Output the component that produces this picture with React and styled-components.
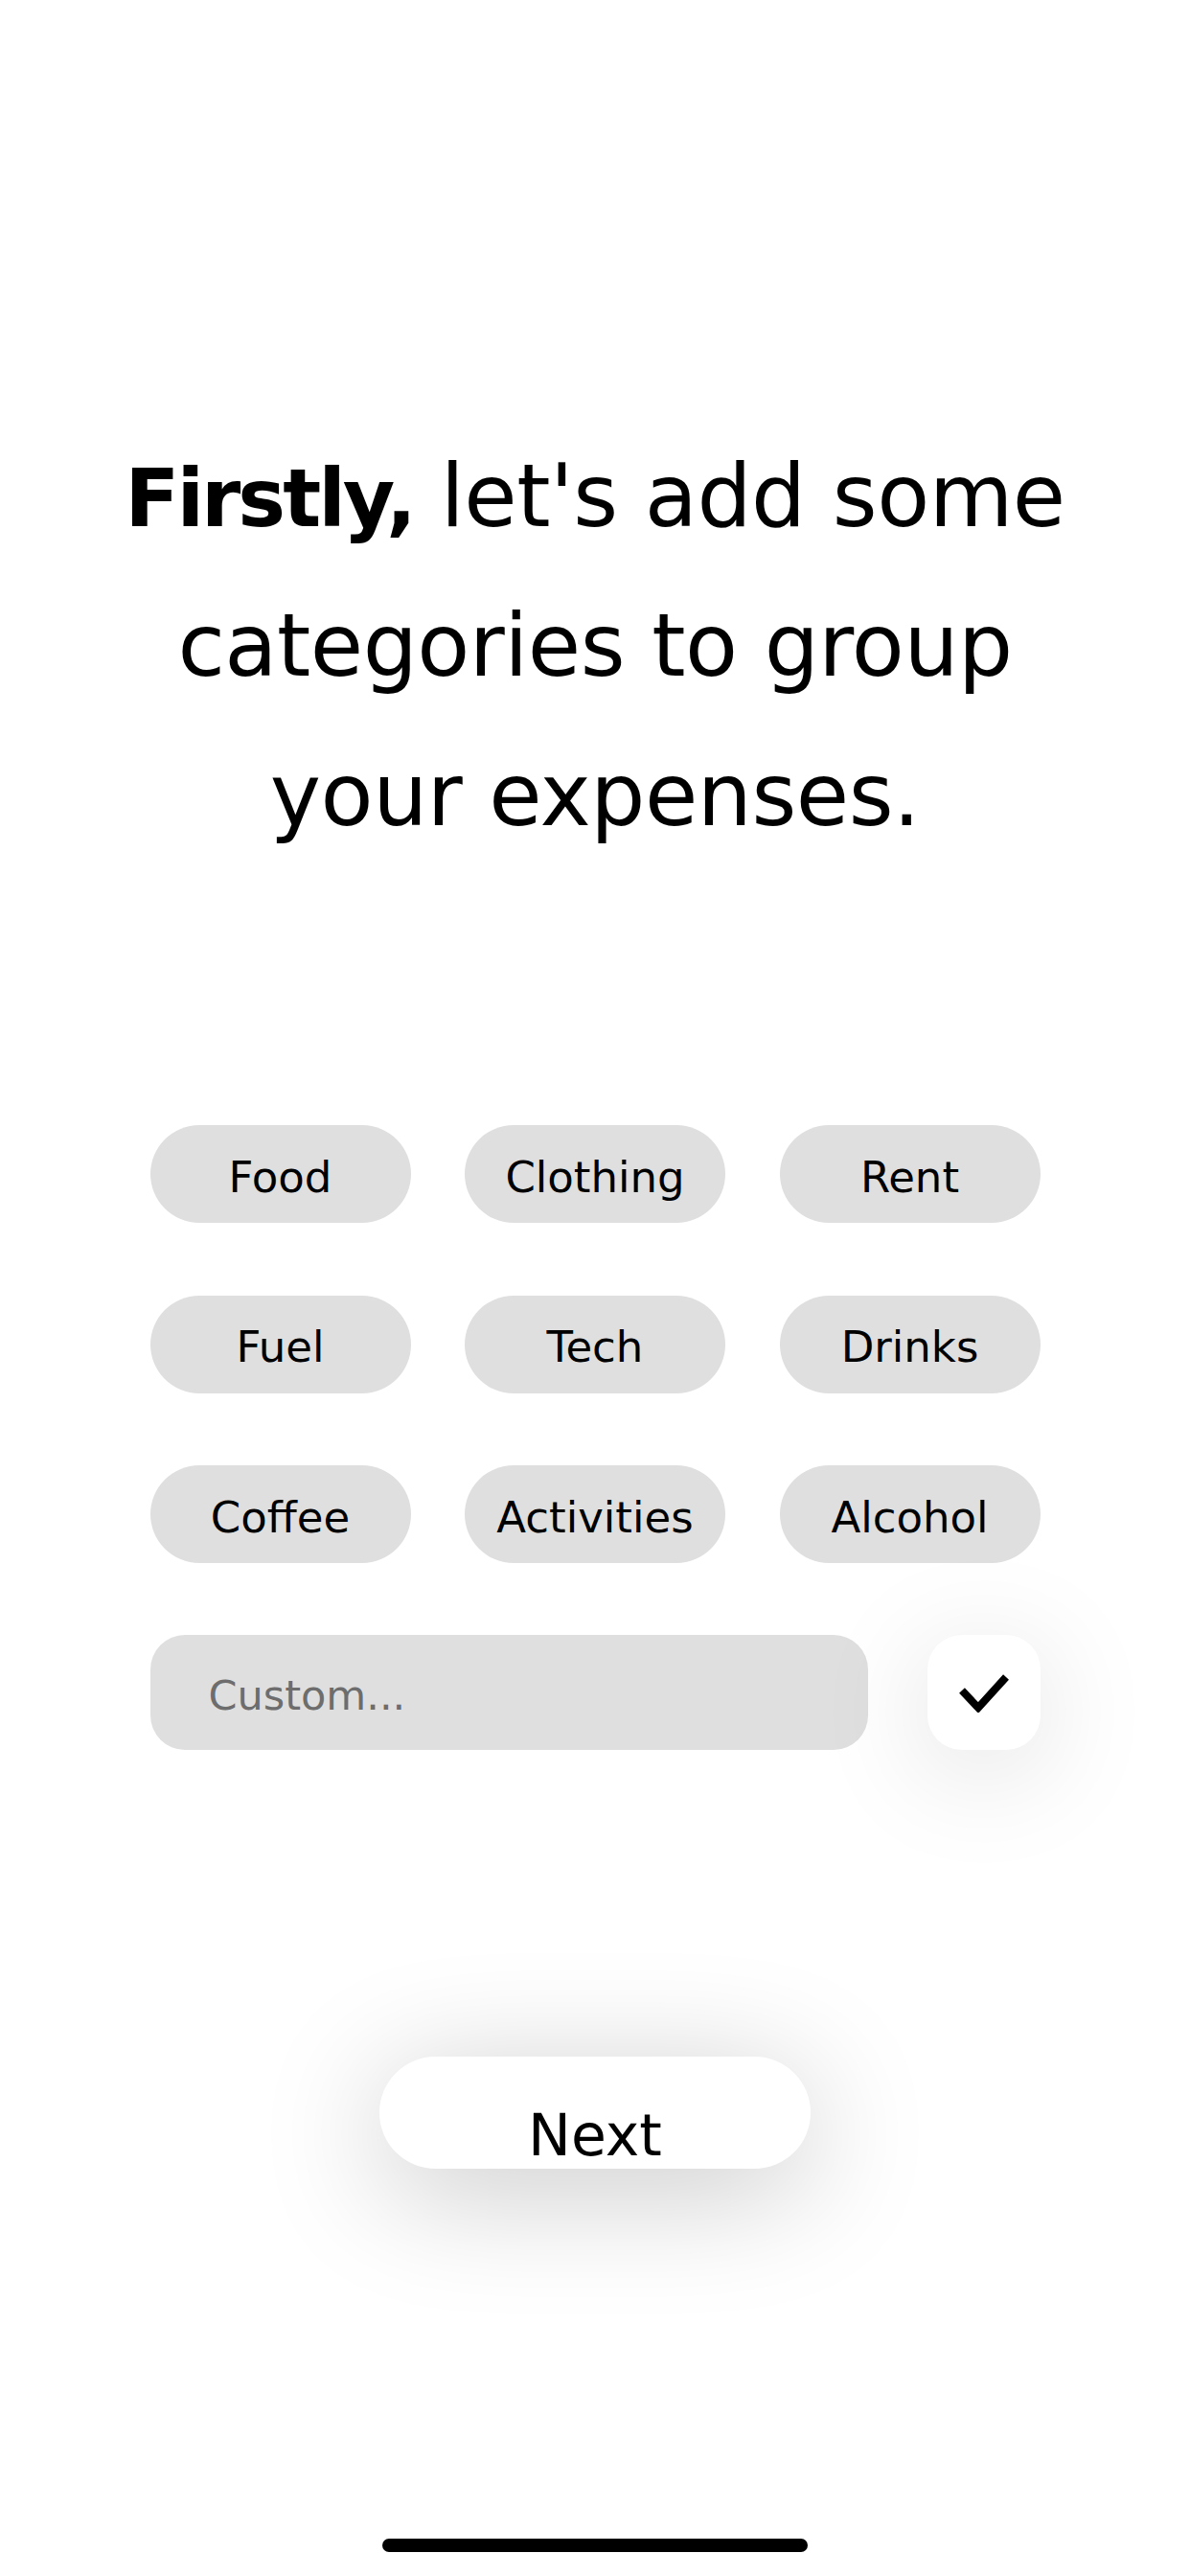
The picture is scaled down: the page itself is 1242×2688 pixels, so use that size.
import styled, { createGlobalStyle } from 'styled-components';

const GlobalStyle = createGlobalStyle`
  * {
    box-sizing: border-box;
  }

  body {
    margin: 0;
    background: #ffffff;
    font-family: "DejaVu Sans", "Noto Sans", sans-serif;
    color: #000000;
  }
`;

const Screen = styled.main`
  min-height: 2688px;
  display: flex;
  flex-direction: column;
  align-items: center;
  padding-top: 440px;
`;

const Heading = styled.h1`
  margin: 0;
  font-size: 90px;
  font-weight: 400;
  line-height: 156px;
  text-align: center;
  letter-spacing: -0.5px;

  strong {
    font-size: 0.93em;
    line-height: 1;
    font-weight: 700;
    letter-spacing: -3px;
  }
`;

const ChipGrid = styled.div`
  margin-top: 266px;
  width: 929px;
  display: grid;
  grid-template-columns: repeat(3, 272px);
  column-gap: 56.5px;
  row-gap: 75.5px;
`;

const Chip = styled.button`
  height: 102px;
  border: none;
  border-radius: 51px;
  background: #dfdfdf;
  font-family: inherit;
  font-size: 45px;
  color: #000000;
  padding: 6px 0 0;
  display: flex;
  align-items: center;
  justify-content: center;
  cursor: pointer;
`;

const CustomRow = styled.div`
  margin-top: 75px;
  width: 929px;
  display: flex;
  justify-content: space-between;
  align-items: center;
`;

const CustomInput = styled.input`
  width: 749px;
  height: 120px;
  border: none;
  border-radius: 36px;
  background: #dfdfdf;
  padding: 6px 0 0 61px;
  font-family: inherit;
  font-size: 43px;
  color: #000000;
  outline: none;

  &::placeholder {
    color: #6d6d6d;
  }
`;

const ConfirmButton = styled.button`
  width: 118px;
  height: 120px;
  border: none;
  border-radius: 36px;
  background: #ffffff;
  box-shadow: 0 20px 120px rgba(0, 0, 0, 0.13);
  display: flex;
  align-items: center;
  justify-content: center;
  padding: 0;
  cursor: pointer;
`;

const NextButton = styled.button`
  margin-top: 320px;
  width: 450px;
  height: 117px;
  border: none;
  border-radius: 59px;
  background: #ffffff;
  box-shadow: 0 22px 130px rgba(0, 0, 0, 0.22);
  font-family: inherit;
  font-size: 60px;
  line-height: 1;
  color: #000000;
  display: flex;
  align-items: flex-end;
  justify-content: center;
  padding: 0 0 5px;
  cursor: pointer;
`;

const HomeIndicator = styled.div`
  margin-top: auto;
  margin-bottom: 25px;
  width: 444px;
  height: 14px;
  border-radius: 7px;
  background: #000000;
`;

const categories = [
  'Food', 'Clothing', 'Rent',
  'Fuel', 'Tech', 'Drinks',
  'Coffee', 'Activities', 'Alcohol',
];

const CheckIcon = () => (
  <svg width="54" height="42" viewBox="0 0 54 42" fill="none">
    <polyline
      points="4,19 21,37 50,5"
      stroke="#000"
      strokeWidth="8"
      strokeLinejoin="miter"
    />
  </svg>
);

export default function App() {
  return (
    <>
      <GlobalStyle />
      <Screen>
        <Heading>
          <strong>Firstly,</strong> let's add some
          <br />
          categories to group
          <br />
          your expenses.
        </Heading>

        <ChipGrid>
          {categories.map(name => (
            <Chip key={name}>{name}</Chip>
          ))}
        </ChipGrid>

        <CustomRow>
          <CustomInput placeholder="Custom..." />
          <ConfirmButton aria-label="Add category">
            <CheckIcon />
          </ConfirmButton>
        </CustomRow>

        <NextButton>Next</NextButton>

        <HomeIndicator />
      </Screen>
    </>
  );
}
